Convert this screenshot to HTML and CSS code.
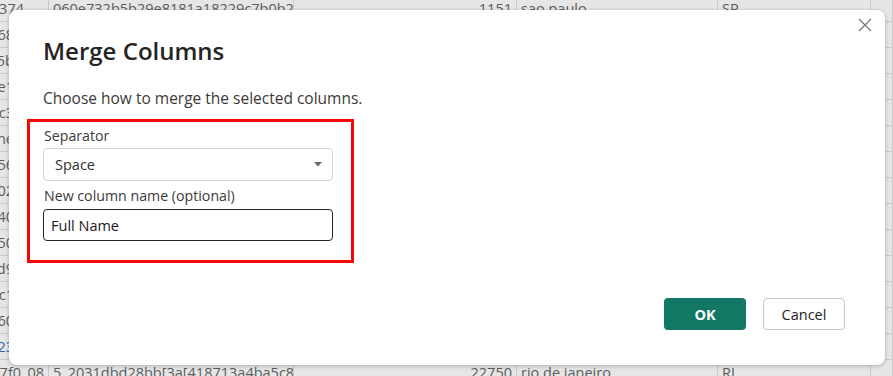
FILE: index.html
```html
<!DOCTYPE html>
<html lang="en">
<head>
    <meta charset="UTF-8"/>
    <title>Merge Columns</title>
    <link rel="stylesheet" href="styles.css">
</head>
<body>
<!-- background grid -->
<div class="grid">
    <div class="row"><div class="c1 first">2b4e0374</div><div class="c2">060e732b5b29e8181a18229c7b0b2</div><div class="c3">1151</div><div class="c4">sao paulo</div><div class="c5">SP</div><div class="c6"></div></div>
    <div class="row"><div class="c1">9d1a68</div><div class="c2"></div><div class="c3"></div><div class="c4"></div><div class="c5"></div><div class="c6"></div></div>
    <div class="row"><div class="c1">41c5b</div><div class="c2"></div><div class="c3"></div><div class="c4"></div><div class="c5"></div><div class="c6"></div></div>
    <div class="row"><div class="c1">7a0e1</div><div class="c2"></div><div class="c3"></div><div class="c4"></div><div class="c5"></div><div class="c6"></div></div>
    <div class="row"><div class="c1">f82c3</div><div class="c2"></div><div class="c3"></div><div class="c4"></div><div class="c5"></div><div class="c6"></div></div>
    <div class="row"><div class="c1">cline</div><div class="c2"></div><div class="c3"></div><div class="c4"></div><div class="c5"></div><div class="c6"></div></div>
    <div class="row"><div class="c1">3e456</div><div class="c2"></div><div class="c3"></div><div class="c4"></div><div class="c5"></div><div class="c6"></div></div>
    <div class="row"><div class="c1">b9402</div><div class="c2"></div><div class="c3"></div><div class="c4"></div><div class="c5"></div><div class="c6"></div></div>
    <div class="row"><div class="c1">d7140</div><div class="c2"></div><div class="c3"></div><div class="c4"></div><div class="c5"></div><div class="c6"></div></div>
    <div class="row"><div class="c1">a0e50</div><div class="c2"></div><div class="c3"></div><div class="c4"></div><div class="c5"></div><div class="c6"></div></div>
    <div class="row"><div class="c1">e51d9</div><div class="c2"></div><div class="c3"></div><div class="c4"></div><div class="c5"></div><div class="c6"></div></div>
    <div class="row"><div class="c1">08fc1</div><div class="c2"></div><div class="c3"></div><div class="c4"></div><div class="c5"></div><div class="c6"></div></div>
    <div class="row"><div class="c1">4b60</div><div class="c2"></div><div class="c3"></div><div class="c4"></div><div class="c5"></div><div class="c6"></div></div>
    <div class="row"><div class="c1 link">c6a23</div><div class="c2"></div><div class="c3"></div><div class="c4"></div><div class="c5"></div><div class="c6"></div></div>
    <div class="row"><div class="c1 last">bd7f0_08</div><div class="c2">5_2031dbd28bb[3a[418713a4ba5c8b5</div><div class="c3">22750</div><div class="c4">rio de janeiro</div><div class="c5">RJ</div><div class="c6"></div></div>
</div>

<!-- dialog -->
<div class="dialog">
    <button class="close" aria-label="Close">
        <svg width="14" height="14" viewBox="0 0 14 14"><path d="M1 1L13 13M13 1L1 13" stroke="#7a7a7a" stroke-width="1.3" fill="none"/></svg>
    </button>
    <div class="title">Merge Columns</div>
    <div class="desc">Choose how to merge the selected columns.</div>

    <div class="highlight">
        <div class="label">Separator</div>
        <div class="select">
            <span>Space</span>
            <svg width="8" height="5" viewBox="0 0 8 5"><path d="M0 0H8L4 4.5Z" fill="#666"/></svg>
        </div>
        <div class="label second">New column name (optional)</div>
        <div class="input">Full Name</div>
    </div>

    <div class="footer">
        <button class="btn ok">OK</button>
        <button class="btn cancel">Cancel</button>
    </div>
</div>
</body>
</html>
```

FILE: styles.css
```css
body {
    margin: 0;
    font-family: "Open Sans", "Noto Sans", sans-serif;
    background-color: #e2e2e2;
    overflow: hidden;
    height: 376px;
}

/* background table, dimmed */
.grid {
    margin-top: -4px;
    margin-left: -40px;
    color: #5c5c5c;
    font-size: 14.5px;
}

.row {
    display: flex;
    height: 25px;
    border-bottom: 1px solid #cacaca;
    background-color: #e6e6e6;
}

.row > div {
    flex-shrink: 0;
    border-right: 1px solid #cacaca;
    display: flex;
    align-items: center;
    padding: 0 4px;
    white-space: nowrap;
    overflow: hidden;
    box-sizing: border-box;
}

.c1 { width: 89px; justify-content: flex-end; padding-right: 34px !important; }
.c1.first { padding-right: 24px !important; }
.c1.last { padding-right: 4px !important; }
.c2 { width: 245px; }
.c3 { width: 223px; justify-content: flex-end; }
.c4 { width: 201px; }
.c5 { width: 153px; }
.c6 { width: 22px; }

.link { color: #3b64b0; }

.dialog {
    position: absolute;
    left: 9px;
    top: 10px;
    width: 876px;
    height: 355px;
    box-sizing: border-box;
    background-color: #fff;
    border-radius: 8px;
    box-shadow: 0 1px 4px rgba(0, 0, 0, 0.25);
    padding: 24px 0 0 34px;
    display: flex;
    flex-direction: column;
    color: #252423;
}

.close {
    position: absolute;
    top: 8px;
    right: 13px;
    padding: 0;
    border: none;
    background: none;
    width: 14px;
    height: 14px;
}

.close svg {
    display: block;
}

.title {
    font-size: 24px;
    font-weight: 600;
    line-height: 34px;
}

.desc {
    font-size: 15.5px;
    margin-top: 20px;
    line-height: 20px;
    color: #3b3a39;
}

.highlight {
    margin-top: 11px;
    margin-left: -16px;
    width: 327px;
    height: 144px;
    box-sizing: border-box;
    border: 3px solid #f70808;
    padding: 4px 18px 0 13px;
}

.label {
    font-size: 14.2px;
    line-height: 20px;
    color: #3b3a39;
    padding-left: 1px;
}

.label.second {
    margin-top: 5px;
}

.select {
    margin-top: 2px;
    height: 33px;
    box-sizing: border-box;
    border: 1px solid #d1d1d1;
    border-radius: 4px;
    display: flex;
    align-items: center;
    justify-content: space-between;
    padding: 0 10px 0 11px;
    font-size: 14.5px;
    color: #323130;
}

.input {
    margin-top: 3px;
    height: 32px;
    box-sizing: border-box;
    border: 1px solid #252423;
    border-radius: 4px;
    display: flex;
    align-items: center;
    padding: 0 7px;
    font-size: 14.5px;
    color: #1b1a19;
}

.footer {
    margin-top: auto;
    margin-bottom: 35px;
    display: flex;
    justify-content: flex-end;
    gap: 17px;
    padding-right: 40px;
}

.btn {
    width: 82px;
    height: 32px;
    border-radius: 4px;
    font-family: "Open Sans", "Noto Sans", sans-serif;
    font-size: 14.5px;
    cursor: pointer;
}

.ok {
    background-color: #117865;
    border: none;
    color: #fff;
    font-weight: 700;
}

.cancel {
    background-color: #fff;
    border: 1px solid #c8c6c4;
    color: #252423;
}
```
